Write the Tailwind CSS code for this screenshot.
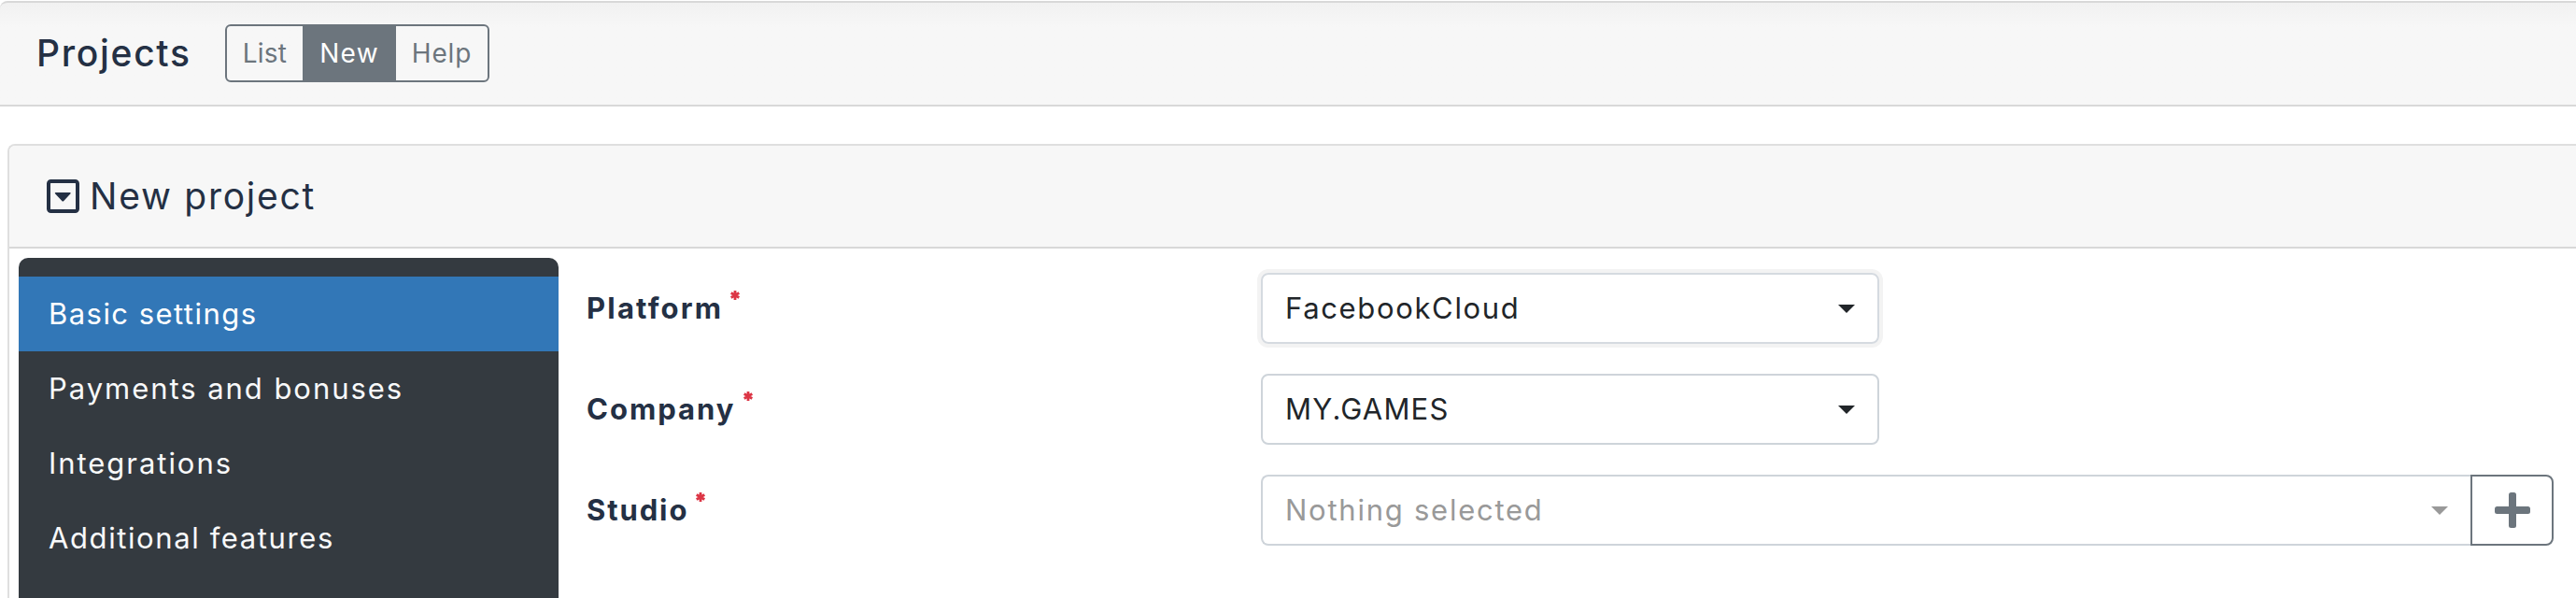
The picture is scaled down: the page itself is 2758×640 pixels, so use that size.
<!DOCTYPE html>
<html lang="en">
<head>
    <meta charset="UTF-8">
    <meta name="viewport" content="width=device-width, initial-scale=1.0">
    <script src="https://cdn.jsdelivr.net/npm/@tailwindcss/browser@4"></script>
    <title>Projects</title>
</head>
<body class="flow-root h-[640px] overflow-hidden bg-white font-[Inter,sans-serif] text-[#243044]">
    <header class="mt-px h-[113px] border-t-2 border-b-2 border-[#d8d8d8] rounded-tl-lg bg-[#f7f7f7] bg-linear-to-b from-[#f1f1f1] to-[#f7f7f7] to-[26px] flex items-center pl-[39px] pb-px">
        <h1 class="w-[202px] text-[39px] font-medium tracking-[1.7px]">Projects</h1>
        <div class="flex h-[62px] w-[283px] overflow-hidden rounded-md border-2 border-[#6c757d] text-[28px] text-[#6c757d]">
            <button class="w-[81px] tracking-[0.2px]">List</button>
            <button class="w-[100px] bg-[#6c757d] tracking-[1.3px] text-white">New</button>
            <button class="flex-1 tracking-[0.8px]">Help</button>
        </div>
    </header>

    <section class="mt-10 ml-2 h-[486px] rounded-tl-lg border-t-2 border-l-2 border-[#dfdfdf]">
        <div class="flex h-[110px] items-center gap-[11px] rounded-tl-md border-b-2 border-[#d8d8d8] bg-[#f7f7f7] pl-10">
            <svg class="h-9 w-[35px]" viewBox="0 0 35 36" fill="none">
                <rect x="2" y="2" width="31" height="32" rx="2.5" stroke="#243044" stroke-width="4"/>
                <path d="M9.5 14h15.500a.8.8 0 0 1 .5 1.300l-7.200 7.700a1.400 1.400 0 0 1-2 0l-7.300-7.700a.8.8 0 0 1 .5-1.300z" fill="#243044"/>
            </svg>
            <h2 class="text-[39px] tracking-[1.75px]">New project</h2>
        </div>

        <div class="flex h-[374px] pt-[10px] pl-[10px]">
            <nav class="w-[578px] rounded-t-[10px] bg-[#343a40] pt-5 text-[31px] text-[#f8f9fa]">
                <a class="flex h-20 items-center bg-[#3277b7] pl-8 tracking-[1.45px] text-white">Basic settings</a>
                <a class="flex h-20 items-center pl-8 tracking-[1.95px]">Payments and bonuses</a>
                <a class="flex h-20 items-center pl-8 tracking-[1.95px]">Integrations</a>
                <a class="flex h-20 items-center pl-8 tracking-[1.6px]">Additional features</a>
            </nav>

            <form class="flex flex-1 flex-col gap-8 pt-4 pr-6 pl-[30px] text-[31px]">
                <div class="flex h-[76px] items-center">
                    <label class="flex w-[722px] items-center gap-2 font-bold tracking-[2.2px]">Platform
                        <svg class="mb-7 size-[10px]" viewBox="0 0 10 10" stroke="#dc3545" stroke-width="2.800"><path d="M5 0v10M.7 2.500l8.600 5M9.300 2.500l-8.600 5"/></svg>
                    </label>
                    <div class="flex h-full w-[662px] items-center justify-between rounded-lg border-2 border-[#d5dae0] pr-6 pl-6 tracking-[1.65px] text-[#212529] ring-4 ring-[#f3f3f3]">FacebookCloud
                        <svg class="h-[9px] w-[18px]" viewBox="0 0 18 9"><path d="M0 0h18L9 9z" fill="#212529"/></svg>
                    </div>
                </div>
                <div class="flex h-[76px] items-center">
                    <label class="flex w-[722px] items-center gap-2 font-bold tracking-[2px]">Company
                        <svg class="mb-7 size-[10px]" viewBox="0 0 10 10" stroke="#dc3545" stroke-width="2.800"><path d="M5 0v10M.7 2.500l8.600 5M9.300 2.500l-8.600 5"/></svg>
                    </label>
                    <div class="flex h-full w-[662px] items-center justify-between rounded-lg border-2 border-[#ced4da] pr-6 pl-6 tracking-[1.2px] text-[#212529]">MY.GAMES
                        <svg class="h-[9px] w-[18px]" viewBox="0 0 18 9"><path d="M0 0h18L9 9z" fill="#212529"/></svg>
                    </div>
                </div>
                <div class="flex h-[76px] items-center">
                    <label class="flex w-[722px] items-center gap-2 font-bold tracking-[1.9px]">Studio
                        <svg class="mb-7 size-[10px]" viewBox="0 0 10 10" stroke="#dc3545" stroke-width="2.800"><path d="M5 0v10M.7 2.500l8.600 5M9.300 2.500l-8.600 5"/></svg>
                    </label>
                    <div class="flex h-full flex-1 items-center justify-between rounded-l-lg border-2 border-r-0 border-[#ced4da] pr-6 pl-6 tracking-[1.75px] text-[#999999]">Nothing selected
                        <svg class="h-[9px] w-[18px]" viewBox="0 0 18 9"><path d="M0 0h18L9 9z" fill="#999999"/></svg>
                    </div>
                    <button type="button" class="flex h-full w-[89px] items-center justify-center rounded-r-lg border-2 border-[#6c757d]">
                        <svg class="size-[38px]" viewBox="0 0 38 38" fill="#6c757d"><rect x="15" width="8" height="38" rx="2.500"/><rect y="15" width="38" height="8" rx="2.500"/></svg>
                    </button>
                </div>
            </form>
        </div>
    </section>
</body>
</html>
